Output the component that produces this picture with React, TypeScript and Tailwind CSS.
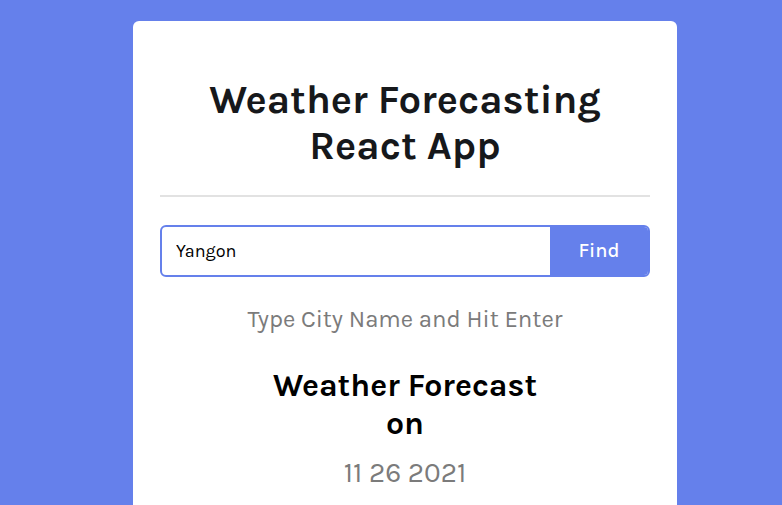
import { useState } from 'react';

const font = { fontFamily: 'Karla, Inter, "Noto Sans", sans-serif' };

const App = () => {
  const [city, setCity] = useState('Yangon');

  return (
    <div className="min-h-screen w-full bg-[#6580eb] flex justify-center pt-[21px] pl-[28px]" style={font}>
      <div className="w-[544px] bg-white rounded-[6px] px-[27px] pt-[56px] pb-10 flex flex-col items-center text-center">
        <h1 className="text-[40px] leading-[46px] font-bold text-[#16181b]">
          Weather Forecasting
          <br />
          React App
        </h1>
        <hr className="w-full mt-[26px] border-0 h-[2px] bg-[#e2e2e2]" />

        <form
          className="w-full mt-[28px] h-[52px] flex border-2 border-[#6580eb] rounded-[6px] overflow-hidden"
          onSubmit={e => e.preventDefault()}>
          <input
            className="flex-1 min-w-0 px-[14px] text-[18px] text-black outline-none"
            value={city}
            onChange={e => setCity(e.target.value)} />
          <button type="submit" className="w-[98px] bg-[#6580eb] text-white text-[20px] font-medium">
            Find
          </button>
        </form>

        <p className="mt-[29px] text-[24px] leading-[26px] text-[#7b7b7b]">Type City Name and Hit Enter</p>

        <h2 className="mt-[35px] text-[32px] leading-[38px] font-bold text-black">
          Weather Forecast
          <br />
          on
        </h2>
        <p className="mt-[15px] text-[28px] leading-[30px] text-[#7b7b7b]">11 26 2021</p>
      </div>
    </div>
  );
};

export default App;
